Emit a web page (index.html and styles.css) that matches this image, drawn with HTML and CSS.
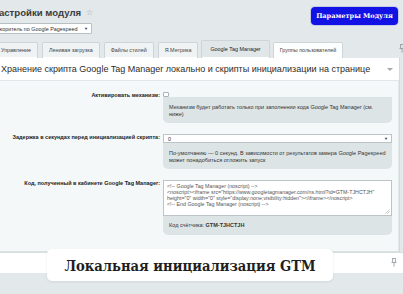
FILE: index.html
```html
<!DOCTYPE html>
<html lang="ru">
<head>
<meta charset="utf-8">
<title>Настройки модуля</title>
<link rel="stylesheet" href="styles.css">
</head>
<body>
<div class="page">
  <header class="top">
    <div class="top-left">
      <h1 class="title">Настройки модуля <span class="star">☆</span></h1>
      <div class="site-select"><span>Ускоритель по Google Pagespeed</span><span class="arr">▼</span></div>
    </div>
    <button class="btn-params">Параметры Модуля</button>
  </header>

  <div class="tabs-row">
    <nav class="tabs">
      <span class="tab first">Управление</span>
      <span class="tab">Ленивая загрузка</span>
      <span class="tab">Файлы стилей</span>
      <span class="tab">Я.Метрика</span>
      <span class="tab active">Google Tag Manager</span>
      <span class="tab hover">Группы пользователей</span>
    </nav>
    <svg class="pin pin-top" width="6" height="9" viewBox="0 0 6 9"><path d="M1 0.5h4M1.6 0.5v4M4.4 0.5v4M0.5 4.5h5M3 4.5v4" stroke="#9aa3a7" stroke-width="1" fill="none"/></svg>
  </div>

  <section class="panel">
    <div class="panel-head">
      <span>Хранение скрипта Google Tag Manager локально и скрипты инициализации на странице</span>
      <span class="caret"></span>
    </div>
    <div class="panel-body">
      <div class="row">
        <label class="lbl">Активировать механизм:</label>
        <div class="field">
          <span class="check"></span>
          <div class="note">Механизм будет работать только при заполнении кода Google Tag Manager (см. ниже)</div>
        </div>
      </div>
      <div class="row">
        <label class="lbl">Задержка в секундах перед инициализацией скрипта:</label>
        <div class="field">
          <div class="select"><span>0</span><span class="arr">▼</span></div>
          <div class="note">По-умолчанию — 0 секунд. В зависимости от результатов замера Google Pagespeed может понадобиться отложить запуск</div>
        </div>
      </div>
      <div class="row">
        <label class="lbl">Код, полученный в кабинете Google Tag Manager:</label>
        <div class="field">
          <div class="code">
            <div>&lt;!-- Google Tag Manager (noscript) --&gt;</div>
            <div>&lt;noscript&gt;&lt;iframe src="https://www.googletagmanager.com/ns.html?id=GTM-TJHCTJH"</div>
            <div>height="0" width="0" style="display:none;visibility:hidden"&gt;&lt;/iframe&gt;&lt;/noscript&gt;</div>
            <div>&lt;!-- End Google Tag Manager (noscript) --&gt;</div>
            <svg class="grip" width="5" height="5" viewBox="0 0 5 5"><path d="M4.5 0.5L0.5 4.5M4.5 2.5L2.5 4.5" stroke="#aab1b4" stroke-width="0.7"/></svg>
          </div>
          <div class="note single">Код счётчика: <b>GTM-TJHCTJH</b></div>
        </div>
      </div>
    </div>
  </section>

  <div class="foot">
    <svg class="pin" width="6" height="9" viewBox="0 0 6 9"><path d="M1 0.5h4M1.6 0.5v4M4.4 0.5v4M0.5 4.5h5M3 4.5v4" stroke="#a3abaf" stroke-width="1" fill="none"/></svg>
  </div>

  <div class="caption">Локальная инициализация GTM</div>
</div>
</body>
</html>
```

FILE: styles.css
```css
* { box-sizing: border-box; margin: 0; padding: 0; }

html, body {
  width: 403px;
  height: 294px;
  overflow: hidden;
}

body {
  background: #e3e9eb;
  font-family: "Liberation Sans", Arial, sans-serif;
  color: #333;
}

.page {
  position: relative;
  height: 294px;
  overflow: hidden;
}

/* top bar */
.top {
  display: flex;
  justify-content: space-between;
  align-items: flex-start;
  height: 40px;
  padding-top: 7px;
  padding-right: 4px;
}

.top-left {
  display: flex;
  flex-direction: column;
  gap: 4px;
}

.title {
  display: flex;
  align-items: center;
  gap: 5px;
  margin-left: -8px;
  font-size: 9.6px;
  line-height: 12px;
  font-weight: bold;
  color: #3b3b3b;
}

.star {
  font-size: 8px;
  font-weight: normal;
  color: #9aa2a6;
}

.site-select {
  display: flex;
  justify-content: space-between;
  align-items: center;
  width: 103px;
  height: 11px;
  margin-left: -11px;
  padding: 0 3px 0 4px;
  background: #fff;
  border: 1px solid #b7c0c4;
  border-radius: 1px;
  font-size: 5.4px;
  color: #333;
}

.site-select .arr,
.select .arr {
  font-size: 4px;
  color: #333;
}

.btn-params {
  width: 87px;
  height: 18px;
  margin-right: 1px;
  background: #1212e4;
  color: #fff;
  border: none;
  border-radius: 4px;
  box-shadow: 0 0 0 1px #c3cbe6;
  font-family: "DejaVu Serif", "Liberation Serif", serif;
  font-weight: bold;
  font-size: 6.6px;
}

/* tabs */
.tabs-row {
  display: flex;
  justify-content: space-between;
  align-items: flex-start;
  height: 18px;
}

.tabs {
  display: flex;
  align-items: flex-end;
  gap: 4px;
  height: 18px;
  margin-left: -6px;
}

.tab {
  height: 16px;
  padding: 0 6px;
  line-height: 15px;
  font-size: 5.4px;
  color: #444;
  background: #eff3f4;
  border: 1px solid #cdd5d8;
  border-bottom: none;
  border-radius: 2px 2px 0 0;
  box-shadow: 0 -1px 0 #fff inset;
  white-space: nowrap;
}

.tab.active {
  height: 18px;
  line-height: 17px;
  margin: 0 -1px;
  padding: 0 8px;
  background: #e1e7e9;
  color: #222;
}

.tab.hover {
  background: #fdfefe;
}

.pin-top {
  margin-top: 4px;
  margin-right: -2px;
}

/* panel */
.panel {
  margin-right: 3px;
  background: #fff;
  border-right: 1px solid #d3dadd;
}

.panel-head {
  display: flex;
  justify-content: space-between;
  align-items: center;
  height: 23px;
  padding: 0 6px 0 1px;
  border-bottom: 1px solid #e1e6e8;
  font-size: 9px;
  color: #2c2c2c;
}

.caret {
  width: 0;
  height: 0;
  border-left: 3px solid transparent;
  border-right: 3px solid transparent;
  border-top: 3px solid #a5acb0;
}

.panel-body {
  display: flex;
  flex-direction: column;
  gap: 11px;
  padding: 11px 7px 16px 0;
  background: #f5f8f9;
  border-right: 1px solid #e3e8ea;
  border-bottom: 1px solid #dbe1e3;
}

.row {
  display: grid;
  grid-template-columns: 160px 229px;
  column-gap: 3px;
  align-items: start;
}

.lbl {
  text-align: right;
  font-size: 5.5px;
  line-height: 6px;
  font-weight: bold;
  color: #222;
}

.field {
  display: flex;
  flex-direction: column;
}

.check {
  display: block;
  width: 6px;
  height: 5px;
  background: #fff;
  border: 1px solid #a9b2b6;
  border-radius: 1px;
}

.note {
  padding: 7px 6.5px 6px 6px;
  background: #dde4e6;
  border-radius: 0 0 5px 5px;
  font-size: 5.5px;
  line-height: 6.5px;
  color: #333;
}

.note.single {
  padding-top: 6px;
}

.select {
  display: flex;
  justify-content: space-between;
  align-items: center;
  height: 9px;
  padding: 0 3px 0 4px;
  background: #fff;
  border: 1px solid #bcc4c7;
  font-size: 5.4px;
}

.code {
  position: relative;
  height: 36px;
  padding: 2px 3px;
  background: #fff;
  border: 1px solid #bcc4c7;
  font-size: 5.3px;
  line-height: 6px;
  color: #555;
  white-space: nowrap;
  overflow: hidden;
}

.grip {
  position: absolute;
  right: 1px;
  bottom: 1px;
}

/* footer */
.foot {
  display: flex;
  justify-content: flex-end;
  align-items: center;
  height: 21px;
  padding-right: 6px;
  background: #fff;
  border-top: 1px solid #d9dfe1;
}

/* caption overlay */
.caption {
  position: absolute;
  left: 47px;
  top: 249px;
  width: 286px;
  height: 32px;
  display: flex;
  align-items: center;
  justify-content: center;
  background: #fff;
  border-radius: 5px;
  box-shadow: 0 1px 3px rgba(0, 0, 0, 0.08);
  font-family: "DejaVu Serif Condensed", "DejaVu Serif", "Liberation Serif", serif;
  font-stretch: condensed;
  font-weight: bold;
  font-size: 14.6px;
  white-space: nowrap;
  color: #1f1f1f;
}
```
